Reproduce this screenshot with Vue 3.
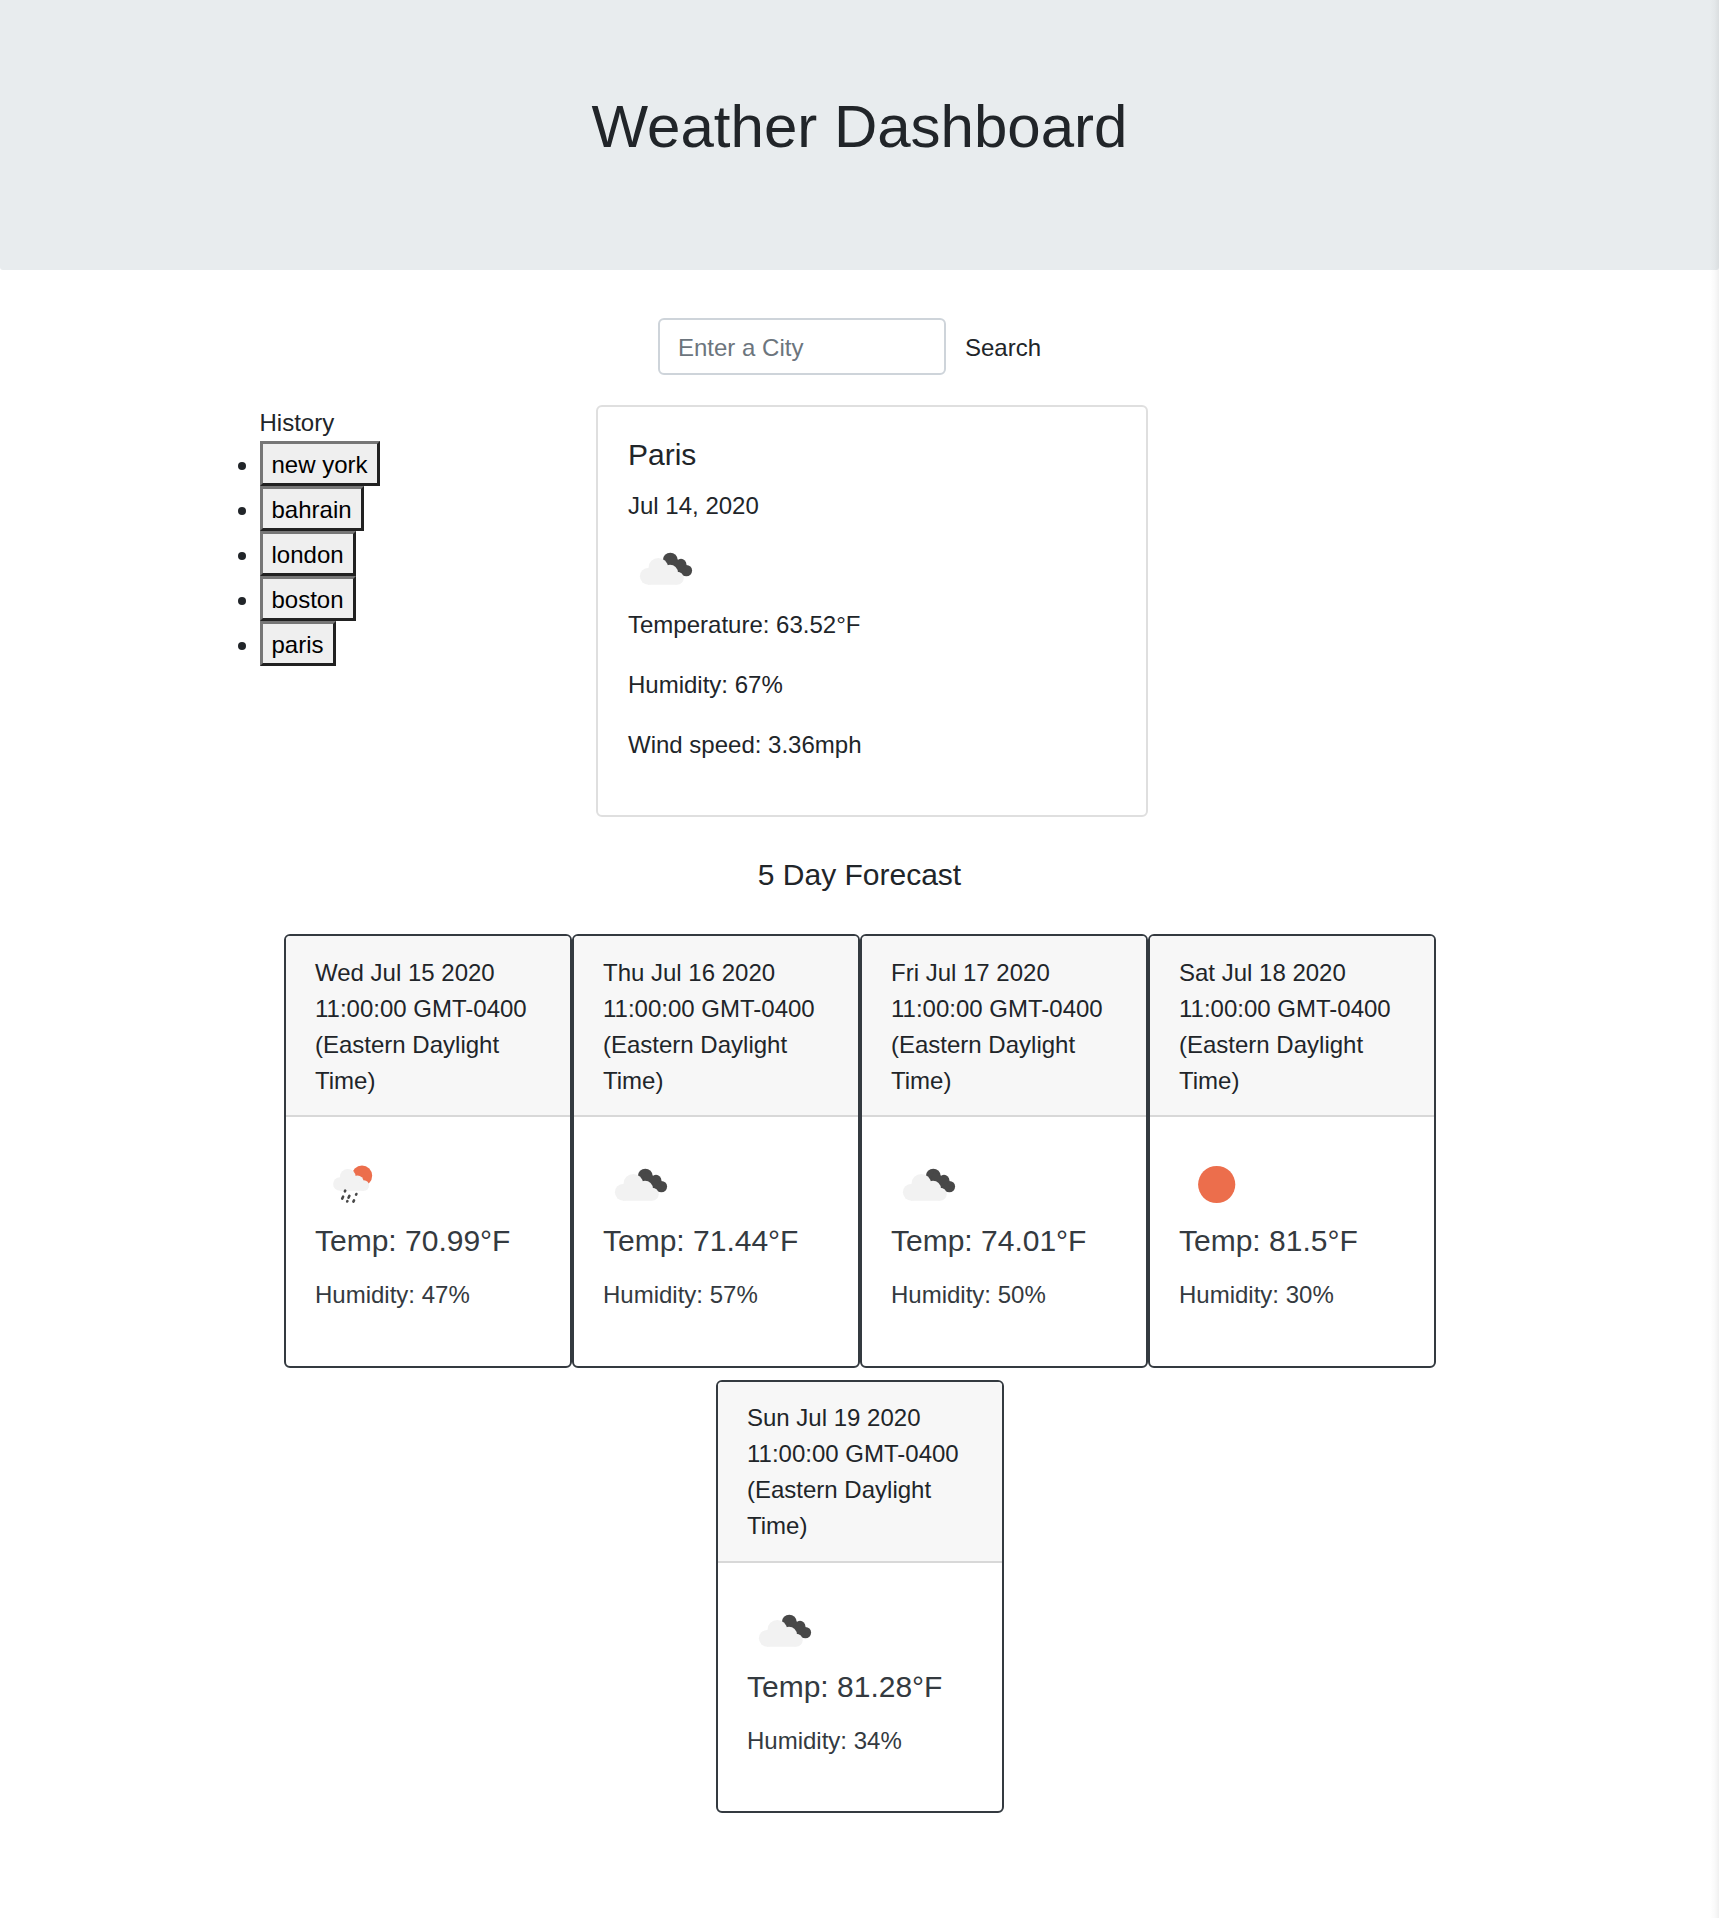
<script setup>
const history = ['new york', 'bahrain', 'london', 'boston', 'paris']
const days = [
  { date: 'Wed Jul 15 2020', icon: 'rain', temp: '70.99', humidity: 47 },
  { date: 'Thu Jul 16 2020', icon: 'cloud', temp: '71.44', humidity: 57 },
  { date: 'Fri Jul 17 2020', icon: 'cloud', temp: '74.01', humidity: 50 },
  { date: 'Sat Jul 18 2020', icon: 'sun', temp: '81.5', humidity: 30 },
  { date: 'Sun Jul 19 2020', icon: 'cloud', temp: '81.28', humidity: 34 },
]
</script>

<template>
  <svg class="symbols" aria-hidden="true">
    <symbol id="cloud" viewBox="0 0 75 75">
      <g fill="#484848">
        <circle cx="42.3" cy="29.1" r="7.4" />
        <circle cx="53" cy="33.2" r="5.4" />
        <circle cx="58.4" cy="39.6" r="5.7" />
        <path d="M43 24L53 31L59 40L55 45L38 38z" />
      </g>
      <g fill="#f2f2f2">
        <circle cx="20.3" cy="45.3" r="8.4" />
        <circle cx="30.3" cy="36.8" r="9.8" />
        <circle cx="42" cy="41.6" r="7.9" />
        <circle cx="49.2" cy="47.2" r="6.5" />
        <path d="M20 40L42 40L49 53.7H20z" />
      </g>
    </symbol>
    <symbol id="rain" viewBox="0 0 75 75">
      <circle cx="47" cy="28.8" r="10.2" fill="#ec6e4c" />
      <g fill="#f2f2f2">
        <circle cx="24.9" cy="37" r="6.8" />
        <circle cx="32.8" cy="29.9" r="7.9" />
        <circle cx="42.3" cy="34.8" r="6.4" />
        <circle cx="48.9" cy="38.5" r="5.2" />
        <path d="M25 32L42 32L49 43.7H25z" />
      </g>
      <path stroke="#484848" stroke-width="2.6" stroke-linecap="round" d="M29.9 44.3l.3-.6M27.2 51.6l.9-1.9M33.5 50.7l.9-1.9M41.1 47.6l.3-.6M32.2 54.5l.2-.4M38.4 54.6l.6-1.2" />
    </symbol>
    <symbol id="sun" viewBox="0 0 75 75">
      <circle cx="37.7" cy="37.5" r="18.6" fill="#ec6e4c" />
    </symbol>
  </svg>
  <div class="page">
    <header class="jumbotron"><h1>Weather Dashboard</h1></header>
    <form class="search" @submit.prevent>
      <input type="text" placeholder="Enter a City" />
      <button type="submit">Search</button>
    </form>
    <main class="current">
      <div class="history">
        <span>History</span>
        <ul>
          <li v-for="city in history" :key="city"><button>{{ city }}</button></li>
        </ul>
      </div>
      <section class="today">
        <h5>Paris</h5>
        <p class="date">Jul 14, 2020</p>
        <svg class="icon"><use href="#cloud" /></svg>
        <p>Temperature: 63.52°F</p>
        <p>Humidity: 67%</p>
        <p>Wind speed: 3.36mph</p>
      </section>
    </main>
    <h5 class="forecast-title">5 Day Forecast</h5>
    <section class="forecast">
      <article v-for="day in days" :key="day.date" class="day">
        <div class="day-header">{{ day.date }} 11:00:00 GMT-0400 (Eastern Daylight Time)</div>
        <div class="day-body">
          <svg class="icon"><use :href="'#' + day.icon" /></svg>
          <h5>Temp: {{ day.temp }}°F</h5>
          <p>Humidity: {{ day.humidity }}%</p>
        </div>
      </article>
    </section>
    <div class="edge"></div>
  </div>
</template>

<style>
body {
  margin: 0;
  background: #fff;
}
</style>

<style scoped>
.symbols {
  display: none;
}
.page {
  position: relative;
  width: 100%;
  height: 1918px;
  overflow: hidden;
  font: 24px/36px "Liberation Sans", Arial, sans-serif;
  color: #212529;
}
.page *, .page {
  box-sizing: border-box;
}
h1, h5, p {
  margin: 0;
  font-weight: 400;
}
h5 {
  font-size: 30px;
  line-height: 36px;
}
.jumbotron {
  height: 270px;
  padding-top: 91px;
  margin-bottom: 48px;
  background: #e8ecee;
  border-radius: 0 0 3px 3px;
  text-align: center;
}
h1 {
  font-size: 60px;
  line-height: 72px;
}
.search {
  display: flex;
  margin-left: 658px;
  height: 57px;
}
.search input {
  width: 288px;
  height: 57px;
  padding: 2px 18px 0;
  border: 2px solid #ced4da;
  border-radius: 6px;
  font: inherit;
  background: #fff;
}
.search input::placeholder {
  color: #6c757d;
  opacity: 1;
}
.search button {
  border: 0;
  padding: 2px 19px 0;
  background: none;
  font: inherit;
  color: #212529;
}
.current {
  display: flex;
  margin: 30px 0 0 259.5px;
  height: 412px;
}
.history {
  width: 336.5px;
}
.history span {
  display: block;
  height: 36px;
}
.history ul {
  margin: 0;
  padding: 0;
  list-style: none;
}
.history li {
  position: relative;
  height: 45px;
}
.history li::before {
  content: "";
  position: absolute;
  left: -22px;
  top: 21px;
  width: 8px;
  height: 8px;
  border-radius: 50%;
  background: #212529;
}
.history button {
  display: block;
  height: 45px;
  padding: 2px 9px 0;
  border: 3px solid;
  border-color: #767676 #212121 #212121 #767676;
  background: #efefef;
  font: inherit;
  color: #000;
}
.today {
  width: 552px;
  padding: 30px;
  border: 2px solid #dfdfdf;
  border-radius: 6px;
}
.today p {
  margin-bottom: 24px;
}
.today .date {
  margin: 15px 0 7px;
}
.icon {
  display: block;
  width: 75px;
  height: 75px;
}
.today .icon {
  margin-bottom: 1px;
}
.forecast-title {
  margin: 40px 0 41px;
  text-align: center;
}
.forecast {
  display: flex;
  flex-wrap: wrap;
  justify-content: center;
  gap: 12.5px 0;
  width: 1152px;
  margin: 0 auto;
}
.day {
  width: 288px;
  height: 433.5px;
  border: 2px solid #343a40;
  border-radius: 6px;
  overflow: hidden;
}
.day:last-child {
  height: 433px;
}
.day-header {
  height: 181px;
  padding: 18.5px 29.5px 0;
  border-bottom: 2px solid #d8d8d8;
  background: #f7f7f7;
}
.day:last-child .day-header {
  padding-top: 18px;
}
.day-body {
  padding: 30px 29.5px;
  color: #343a40;
}
.day-body .icon {
  margin-bottom: 1px;
}
.day-body p {
  margin-top: 18px;
}
.edge {
  position: absolute;
  top: 0;
  right: 0;
  width: 9px;
  height: 100%;
  background: linear-gradient(to right, transparent, rgba(0, 0, 0, 0.02) 50%, rgba(0, 0, 0, 0.06));
}
</style>
